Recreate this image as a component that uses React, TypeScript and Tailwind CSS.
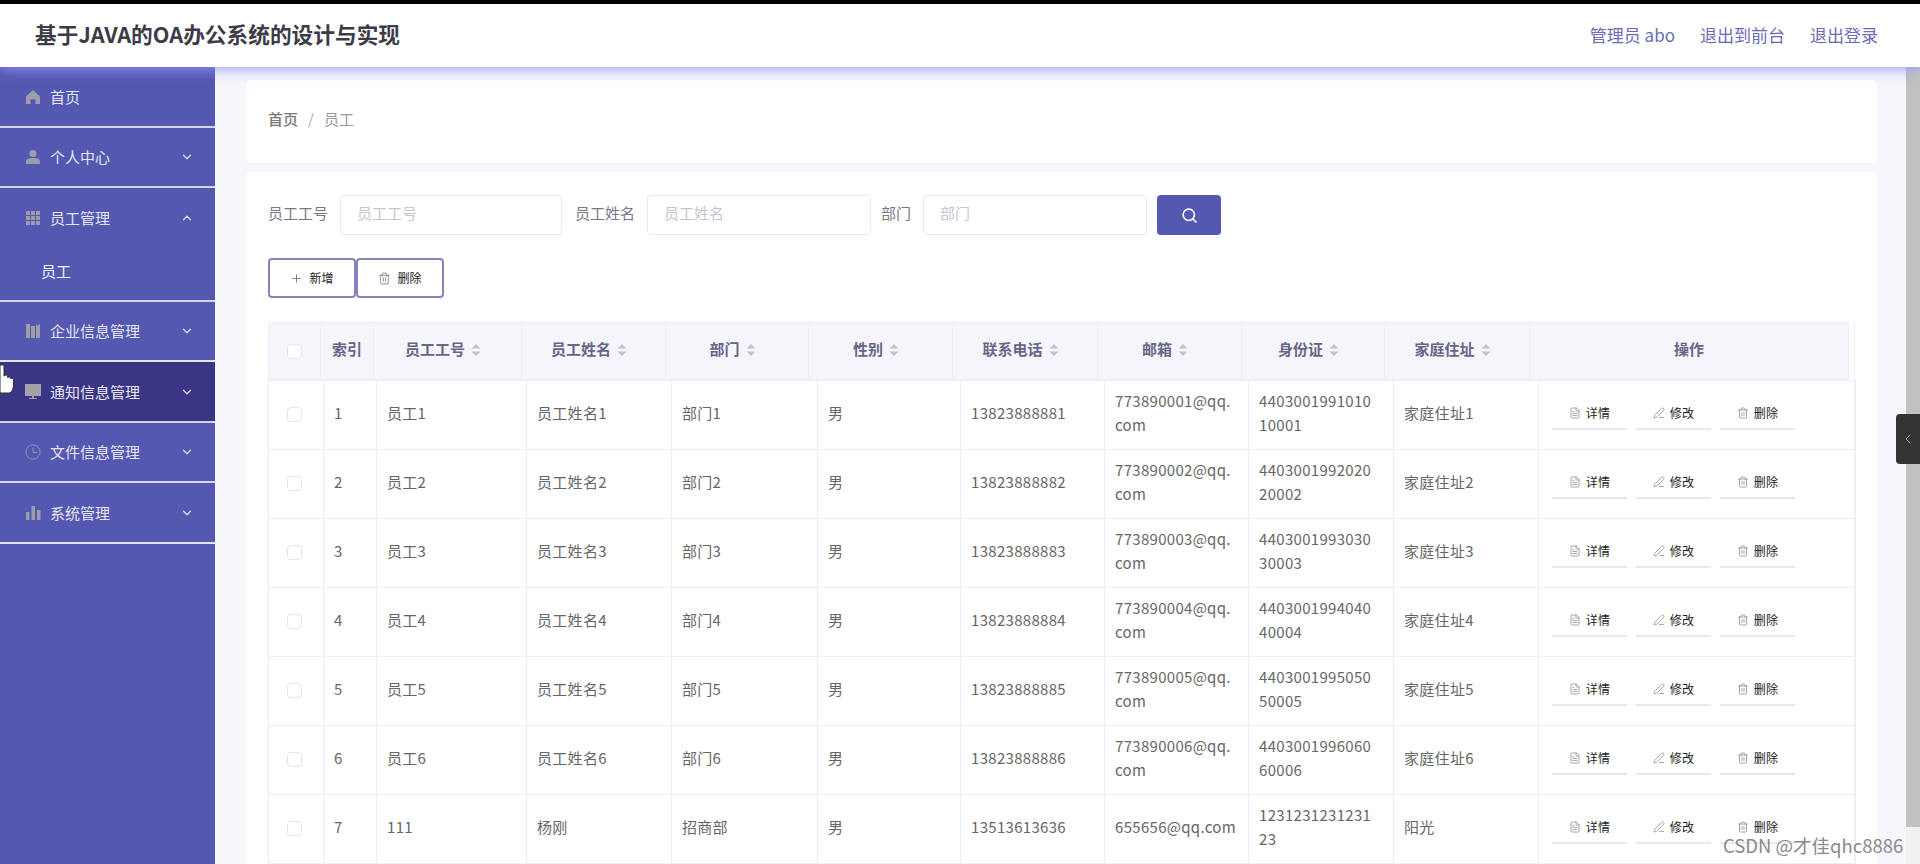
import { ChevronDown, ChevronLeft, ChevronUp, FileText, PenLine, Plus, Search, Trash2 } from 'lucide-react';
import type { ReactNode } from 'react';

const headWidths = [52, 53, 148, 144, 143, 144, 145, 144, 143, 145, 319];
const bodyWidths = [55, 53, 150, 145, 146, 143, 144, 144, 145, 145, 317];

const headers = ['员工工号', '员工姓名', '部门', '性别', '联系电话', '邮箱', '身份证', '家庭住址'];

const rows = [
  ['1', '员工1', '员工姓名1', '部门1', '男', '13823888881', '773890001@qq.com', '440300199101010001', '家庭住址1'],
  ['2', '员工2', '员工姓名2', '部门2', '男', '13823888882', '773890002@qq.com', '440300199202020002', '家庭住址2'],
  ['3', '员工3', '员工姓名3', '部门3', '男', '13823888883', '773890003@qq.com', '440300199303030003', '家庭住址3'],
  ['4', '员工4', '员工姓名4', '部门4', '男', '13823888884', '773890004@qq.com', '440300199404040004', '家庭住址4'],
  ['5', '员工5', '员工姓名5', '部门5', '男', '13823888885', '773890005@qq.com', '440300199505050005', '家庭住址5'],
  ['6', '员工6', '员工姓名6', '部门6', '男', '13823888886', '773890006@qq.com', '440300199606060006', '家庭住址6'],
  ['7', '111', '杨刚', '招商部', '男', '13513613636', '655656@qq.com', '123123123123123', '阳光'],
];

function HomeIcon() {
  return (
    <svg viewBox="0 0 16 16" className="h-4 w-4 fill-[#9c9cac]">
      <path d="M8 1 1 7.500V15h4.500v-4.500h5V15H15V7.500z" />
    </svg>
  );
}

function UserIcon() {
  return (
    <svg viewBox="0 0 16 16" className="h-4 w-4 fill-[#9c9cac]">
      <circle cx="8" cy="4.500" r="3.500" />
      <path d="M1 15v-2.500C1 10 3.500 9 8 9s7 1 7 3.500V15z" />
    </svg>
  );
}

function GridIcon() {
  return (
    <svg viewBox="0 0 16 16" className="h-4 w-4 fill-[#9c9cac]">
      <path d="M1 1h4v4H1zM6 1h4v4H6zM11 1h4v4h-4zM1 6h4v4H1zM6 6h4v4H6zM11 6h4v4h-4zM1 11h4v4H1zM6 11h4v4H6zM11 11h4v4h-4z" />
    </svg>
  );
}

function BookIcon() {
  return (
    <svg viewBox="0 0 16 16" className="h-4 w-4 fill-[#9c9cac]">
      <path d="M1 1h4v14H1zM6 3h4v12H6zM11 1l1.500 2L14 1h1v14h-4z" />
    </svg>
  );
}

function MonitorIcon() {
  return (
    <svg viewBox="0 0 16 16" className="h-4 w-4 fill-[#a2a2a8]">
      <path d="M0 0h16v12H0zM7 12h2v2h3v1H4v-1h3z" />
    </svg>
  );
}

function ClockIcon() {
  return (
    <svg viewBox="0 0 18 18" className="h-[18px] w-[18px] fill-none stroke-[#9c9cac]">
      <circle cx="9" cy="9" r="8" />
      <path d="M9 4v5.500h4.500" />
    </svg>
  );
}

function BarsIcon() {
  return (
    <svg viewBox="0 0 16 16" className="h-4 w-4 fill-[#9c9cac]">
      <path d="M1 7h3.500v8H1zM6.500 1h3.500v14H6.500zM12 5h3.500v10H12z" />
    </svg>
  );
}

function SortCaret() {
  return (
    <svg viewBox="0 0 10 14" className="ml-[6px] h-[14px] w-[10px] fill-[#c0c4cc]">
      <path d="M5 1 9.500 5.500H.5zM5 13 .5 8.500h9z" />
    </svg>
  );
}

function MenuItem({ icon, label, arrow, active }: { icon: ReactNode; label: string; arrow?: 'up' | 'down'; active?: boolean }) {
  return (
    <div className={`flex h-[58.5px] items-center pl-[25px] pr-[21px] pt-[1px] text-[15px] text-[#e4e4f2] ${active ? 'bg-[#3a3585]' : ''}`}>
      <span className="flex w-4 justify-center">{icon}</span>
      <span className="ml-[9px] flex-1">{label}</span>
      {arrow === 'down' && <ChevronDown size={14} strokeWidth={2.25} className="text-[#dcdcec]" />}
      {arrow === 'up' && <ChevronUp size={14} strokeWidth={2.25} className="text-[#dcdcec]" />}
    </div>
  );
}

function Sidebar() {
  return (
    <aside className="w-[215px] shrink-0 bg-[#5558b0]">
      <div className="border-b-2 border-[#d5d5e6]">
        <MenuItem icon={<HomeIcon />} label="首页" />
      </div>
      <div className="border-b-2 border-[#d5d5e6]">
        <MenuItem icon={<UserIcon />} label="个人中心" arrow="down" />
      </div>
      <div className="border-b-2 border-[#d5d5e6]">
        <MenuItem icon={<GridIcon />} label="员工管理" arrow="up" />
        <div className="flex h-[53px] items-center pb-[3px] pl-[41px] text-[15px] text-[#eeeef8]">员工</div>
      </div>
      <div className="border-b-2 border-[#e6e6f2]">
        <MenuItem icon={<BookIcon />} label="企业信息管理" arrow="down" />
      </div>
      <div className="border-b-2 border-[#d5d5e6]">
        <MenuItem icon={<MonitorIcon />} label="通知信息管理" arrow="down" active />
      </div>
      <div className="border-b-2 border-[#d5d5e6]">
        <MenuItem icon={<ClockIcon />} label="文件信息管理" arrow="down" />
      </div>
      <div className="border-b-2 border-[#e6e6f2]">
        <MenuItem icon={<BarsIcon />} label="系统管理" arrow="down" />
      </div>
    </aside>
  );
}

function FilterField({ label, inputWidth }: { label: string; inputWidth: string }) {
  return (
    <div className="flex items-center">
      <span className="mr-3 pb-[3px] text-[15px] text-[#777789]">{label}</span>
      <div className={`flex h-10 items-center rounded border border-[#e9e9f6] bg-white pb-[3px] pl-4 text-[15px] text-[#c4c6d0] ${inputWidth}`}>
        {label}
      </div>
    </div>
  );
}

function RowAction({ icon, label }: { icon: ReactNode; label: string }) {
  return (
    <button className="flex h-[32px] w-[75px] items-center justify-center gap-[5px] border-b-2 border-[#e8e8f0] text-xs leading-none text-[#222]">
      {icon}
      {label}
    </button>
  );
}

function EmployeeTable() {
  return (
    <div className="border-r border-[#eeeef8]">
      <table className="w-[1580px] table-fixed border-collapse">
        <colgroup>
          {headWidths.map((w, i) => (
            <col key={i} style={{ width: w }} />
          ))}
        </colgroup>
        <thead>
          <tr className="h-[57px] bg-[#f6f5fb] text-[15px] font-bold text-[#666688]">
            <th className="border border-[#eeeef8] pb-[3px]">
              <span className="inline-block h-[15px] w-[15px] rounded-sm border border-[#e4e4ee] bg-white align-middle" />
            </th>
            <th className="border border-[#eeeef8] pb-[3px] font-bold">索引</th>
            {headers.map(h => (
              <th key={h} className="border border-[#eeeef8] pb-[3px] pr-[9px]">
                <span className="flex items-center justify-center">
                  {h}
                  <SortCaret />
                </span>
              </th>
            ))}
            <th className="border border-[#eeeef8] pb-[3px]">操作</th>
          </tr>
        </thead>
      </table>
      <table className="w-[1587px] table-fixed border-collapse">
        <colgroup>
          {bodyWidths.map((w, i) => (
            <col key={i} style={{ width: w }} />
          ))}
        </colgroup>
        <tbody>
          {rows.map(row => (
            <tr key={row[0]} className="h-[69px] text-[15px] leading-6 tracking-[0.3px] text-[#666]">
              <td className="border border-[#eeeef8] pb-[5px] text-center">
                <span className="-ml-[4px] inline-block h-[15px] w-[15px] rounded-sm border border-[#e4e4ee] align-middle" />
              </td>
              {row.map((value, i) => (
                <td key={i} className={`border border-[#eeeef8] pb-[5px] pl-[10px] break-all ${i === 6 ? 'pr-[10px]' : 'pr-[14px]'}`}>
                  {value}
                </td>
              ))}
              <td className="border border-[#eeeef8] pl-[13px]">
                <div className="flex gap-[9px] pb-[2px]">
                  <RowAction icon={<FileText size={12} strokeWidth={1.5} className="text-[#888]" />} label="详情" />
                  <RowAction icon={<PenLine size={12} strokeWidth={1.5} className="text-[#888]" />} label="修改" />
                  <RowAction icon={<Trash2 size={12} strokeWidth={1.5} className="text-[#888]" />} label="删除" />
                </div>
              </td>
            </tr>
          ))}
        </tbody>
      </table>
    </div>
  );
}

export default function App() {
  return (
    <div className="relative flex h-[864px] flex-col overflow-hidden bg-white font-['Noto_Sans_CJK_SC','Noto_Sans',sans-serif]">
      <div className="z-20 h-1 shrink-0 bg-black" />
      <header className="z-10 flex h-[63px] shrink-0 items-center justify-between bg-white pb-[2px] pl-[35px] pr-[42px] shadow-[0_3px_12px_rgba(150,150,255,0.8)]">
        <h1 className="text-[21.7px] font-bold text-[#3c3c48]">基于JAVA的OA办公系统的设计与实现</h1>
        <div className="flex gap-[25px] text-[17px] text-[#6a6cb4]">
          <span>管理员 abo</span>
          <span>退出到前台</span>
          <span>退出登录</span>
        </div>
      </header>
      <div className="flex min-h-0 flex-1">
        <Sidebar />
        <main className="min-w-0 flex-1 bg-[#f6f6fc] pl-[32px] pr-[29px] pt-[13px]">
          <div className="flex h-[83px] items-center rounded-sm bg-white pb-[5px] pl-[21px] text-[15px]">
            <span className="font-medium text-[#777]">首页</span>
            <span className="mx-[10px] text-[#aaa]">/</span>
            <span className="text-[#999]">员工</span>
          </div>
          <section className="mt-[9px] h-[800px] rounded-sm bg-white pl-[21px] pr-[22px] pt-[23px]">
            <div className="flex items-center">
              <FilterField label="员工工号" inputWidth="w-[222px]" />
              <div className="ml-[13px]">
                <FilterField label="员工姓名" inputWidth="w-[224px]" />
              </div>
              <div className="ml-[10px]">
                <FilterField label="部门" inputWidth="w-[224px]" />
              </div>
              <button className="ml-[10px] flex h-10 w-[64px] items-center justify-center rounded bg-[#5558b0] text-white">
                <Search size={17} strokeWidth={2.25} />
              </button>
            </div>
            <div className="mt-[23px] flex">
              <button className="flex h-10 w-[88px] items-center justify-center gap-[6px] rounded border-2 border-[#8585bd] text-xs text-[#222]">
                <Plus size={13} strokeWidth={1.5} className="text-[#666]" />
                新增
              </button>
              <button className="flex h-10 w-[88px] items-center justify-center gap-[6px] rounded border-2 border-[#8585bd] text-xs text-[#222]">
                <Trash2 size={13} strokeWidth={1.5} className="text-[#777]" />
                删除
              </button>
            </div>
            <div className="mt-[24px]">
              <EmployeeTable />
            </div>
          </section>
        </main>
        <div className="w-[14px] shrink-0 bg-[#f1f1f1]">
          <div className="h-[760px] bg-[#c1c1c1]" />
        </div>
      </div>

      {/* drawer handle on the right edge */}
      <div className="absolute right-0 top-[414px] flex h-[50px] w-6 items-center justify-center rounded-l bg-[#333]">
        <ChevronLeft size={16} strokeWidth={1} className="text-[#ddd]" />
      </div>

      {/* mouse cursor caught in the recording */}
      <svg viewBox="0 0 16 30" className="absolute left-0 top-[364px] h-[30px] w-4">
        <path
          d="M0 1h2.500c1 0 1.500 1 1.500 2v9l2-1c1 0 1.500.5 1.500 1.500v1l1.500-.5c1 0 1.500.5 1.500 1.500l1.500-.2c1 0 1.500.7 1.500 1.700V21c0 4-2 8-5 8H0z"
          fill="#fff"
          stroke="#333"
          strokeWidth="1"
        />
      </svg>

      {/* video watermark */}
      <div className="absolute left-[1723px] top-[836px] text-[18.5px] leading-none text-[#8a8a8a]">CSDN @才佳qhc8886</div>
    </div>
  );
}
